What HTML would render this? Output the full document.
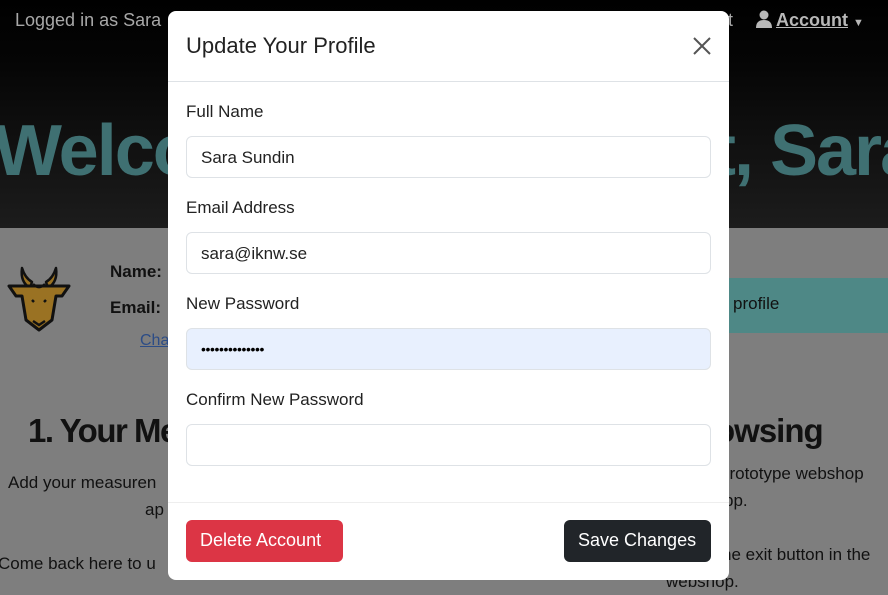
<!DOCTYPE html>
<html><head><meta charset="utf-8"><style>
*{box-sizing:border-box;margin:0;padding:0}
body{width:888px;height:595px;overflow:hidden;position:relative;font-family:"Liberation Sans",sans-serif;background:#7e7e7e;color:#111}
.top{position:absolute;left:0;top:0;width:888px;height:228px;background:linear-gradient(#000 0,#050505 60px,#1c1c1c 228px)}
.abs{position:absolute;white-space:nowrap}
.modal{position:absolute;left:168px;top:11px;width:561px;height:569px;background:#fff;border-radius:8px}
.lbl{position:absolute;left:18px;font-size:17px;color:#222}
.inp{position:absolute;left:18px;width:525px;height:42px;border:1px solid #dee2e6;border-radius:6px;font-size:17px;padding:11px 14px;color:#222}
.btn{position:absolute;top:509px;height:42px;border-radius:6px;color:#fff;font-size:18px;padding:10px 14px}
</style></head><body>
<div class="top"></div>
<div class="abs" style="left:15px;top:10px;font-size:18px;color:#a8a8a8">Logged in as Sara</div>
<div class="abs" style="left:728px;top:10px;font-size:18px;color:#a8a8a8">t</div>
<svg class="abs" style="left:756px;top:10px" width="16" height="18" viewBox="0 0 16 18"><circle cx="8" cy="5" r="4.5" fill="#b8b8b8"/><path d="M0 18 Q0 10 8 10 Q16 10 16 18Z" fill="#b8b8b8"/></svg>
<div class="abs" style="left:776px;top:10px;font-size:18px;color:#b8b8b8;font-weight:bold"><u>Account</u> <span style="font-size:11px">&#9660;</span></div>
<div class="abs" style="left:-6px;top:110px;font-size:72px;font-weight:bold;color:#3f7072;letter-spacing:-2px">Welco</div>
<div class="abs" style="left:712px;top:110px;font-size:72px;font-weight:bold;color:#3f7072;letter-spacing:-2px">t, Sara</div>
<svg class="abs" style="left:6px;top:266px" width="66" height="66" viewBox="0 0 66 66"><path d="M16 2 Q14 16 24 22 L26 16 Q19 12 16 2Z M50 2 Q52 16 42 22 L40 16 Q47 12 50 2Z" fill="#9a7223" stroke="#111" stroke-width="2.5" stroke-linejoin="round"/><path d="M3 20 H63 L56 30 H50 L46 54 L33 64 L20 54 L16 30 H10Z" fill="#9a7223" stroke="#111" stroke-width="3" stroke-linejoin="round"/><path d="M27 18 Q33 24 39 18 M26 34 L28 36 M40 34 L38 36 M27 55 L33 59 L39 55" fill="none" stroke="#111" stroke-width="2.5"/></svg>
<div class="abs" style="left:110px;top:262px;font-size:17px;font-weight:bold;color:#111">Name:</div>
<div class="abs" style="left:110px;top:298px;font-size:17px;font-weight:bold;color:#111">Email:</div>
<div class="abs" style="left:140px;top:332px;font-size:16px;color:#2c4c86;text-decoration:underline">Cha</div>
<div class="abs" style="left:700px;top:278px;width:188px;height:55px;background:#4e8886"></div>
<div class="abs" style="left:733px;top:294px;font-size:17px;color:#111">profile</div>
<div class="abs" style="left:28px;top:412px;font-size:33px;font-weight:bold;color:#111;letter-spacing:-1.5px">1. Your Me</div>
<div class="abs" style="left:715px;top:412px;font-size:33px;font-weight:bold;color:#111;letter-spacing:-1px">owsing</div>
<div class="abs" style="left:8px;top:473px;font-size:17px;color:#111">Add your measuren</div>
<div class="abs" style="left:145px;top:500px;font-size:17px;color:#111">ap</div>
<div class="abs" style="left:-2px;top:554px;font-size:17px;color:#111">Come back here to u</div>
<div class="abs" style="left:720px;top:464px;font-size:17px;color:#111">prototype webshop</div>
<div class="abs" style="left:724px;top:491px;font-size:17px;color:#111">pp.</div>
<div class="abs" style="left:722px;top:545px;font-size:17px;color:#111">he exit button in the</div>
<div class="abs" style="left:666px;top:572px;font-size:17px;color:#111">webshop.</div>
<div class="modal">
<div class="abs" style="left:18px;top:22px;font-size:22px;color:#222">Update Your Profile</div>
<svg class="abs" style="left:525px;top:26px" width="18" height="18" viewBox="0 0 18 18"><path d="M1 1L17 17M17 1L1 17" stroke="#555" stroke-width="2"/></svg>
<div class="abs" style="left:0;top:70px;width:561px;border-top:1px solid #dee2e6"></div>
<div class="lbl" style="top:91px">Full Name</div>
<div class="inp" style="top:125px">Sara Sundin</div>
<div class="lbl" style="top:187px">Email Address</div>
<div class="inp" style="top:221px">sara@iknw.se</div>
<div class="lbl" style="top:283px">New Password</div>
<div class="inp" style="top:317px;background:#e8f0fe;font-size:14px;letter-spacing:-0.4px;padding-top:12px;color:#000">&#8226;&#8226;&#8226;&#8226;&#8226;&#8226;&#8226;&#8226;&#8226;&#8226;&#8226;&#8226;&#8226;&#8226;</div>
<div class="lbl" style="top:379px">Confirm New Password</div>
<div class="inp" style="top:413px"></div>
<div class="abs" style="left:0;top:491px;width:561px;border-top:1px solid #eee"></div>
<div class="btn" style="left:18px;width:157px;background:#dc3545">Delete Account</div>
<div class="btn" style="left:396px;width:147px;background:#212529">Save Changes</div>
</div>
</body></html>
